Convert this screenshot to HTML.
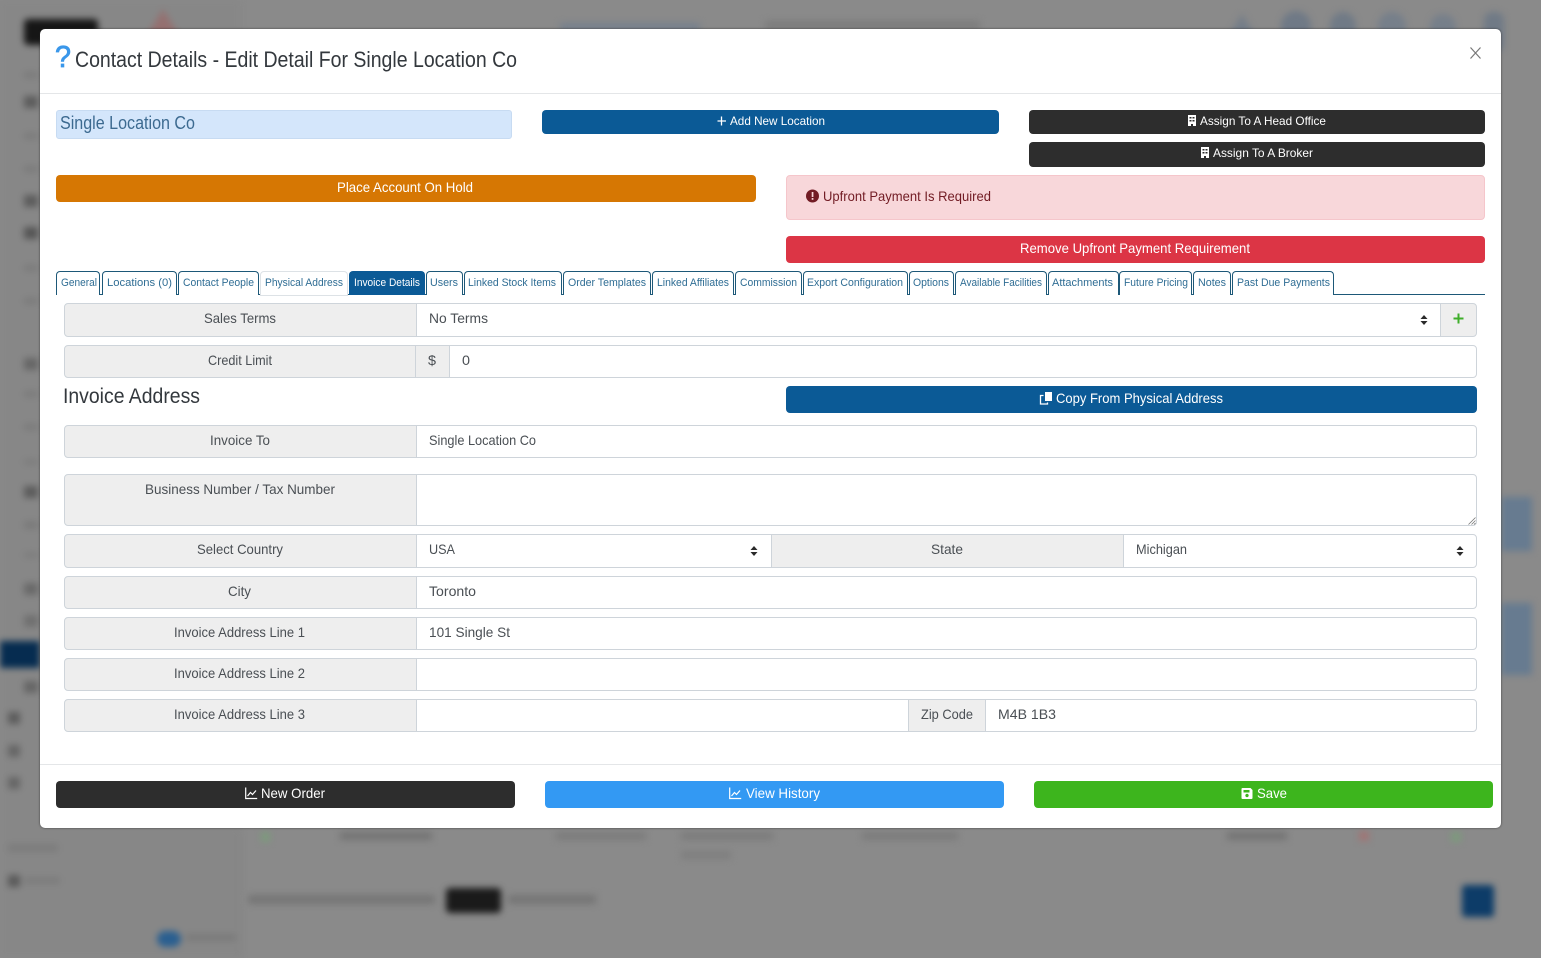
<!DOCTYPE html>
<html lang="en"><head><meta charset="utf-8"><title>Contact Details</title>
<style>
html,body{margin:0;padding:0;width:1541px;height:958px;overflow:hidden;background:#8a8a8a}
#bg{position:absolute;left:0;top:0;width:1541px;height:958px;filter:blur(3.500px);overflow:hidden}
#bg div{position:absolute}
#modal{position:absolute;left:40px;top:29px;width:1461px;height:799px;background:#fff;border-radius:5px;box-shadow:0 0 2px rgba(40,40,40,.8)}
.b{position:absolute;box-sizing:border-box}
.btn{border-radius:4px}
.lab{background:#eee;border:1px solid #ced4da;border-radius:4px 0 0 4px}
.inp{background:#fff;border:1px solid #ced4da}
.rr{border-radius:0 4px 4px 0}
.tab{position:absolute;top:271px;height:24px;box-sizing:border-box;border:1px solid #1d5878;border-bottom:0;border-radius:4px 4px 0 0;background:#fff}
svg#t{position:absolute;left:0;top:0}
svg#t text{font-family:"Liberation Sans",sans-serif;fill:#4a4f54}
</style></head><body>
<div id="bg">
<div style="left:-10px;top:-10px;width:250px;height:980px;background:#878787"></div>
<div style="left:24px;top:19px;width:74px;height:26px;background:#161616;border-radius:4px"></div>
<div style="left:145px;top:9px;width:36px;height:30px;background:#947070;clip-path:polygon(50% 0,100% 100%,0 100%)"></div>
<div style="left:560px;top:23px;width:140px;height:8px;background:#76808d"></div>
<div style="left:765px;top:21px;width:215px;height:8px;background:#7c7c7c"></div>
<div style="left:1226px;top:14px;width:32px;height:26px;background:#747d88;clip-path:polygon(50% 0,100% 100%,0 100%)"></div>
<div style="left:1281px;top:11px;width:30px;height:30px;background:#6f7986;border-radius:50%"></div>
<div style="left:1330px;top:12px;width:26px;height:28px;background:#707a86;border-radius:50%"></div>
<div style="left:1378px;top:12px;width:28px;height:28px;background:#767f8a;border-radius:50%"></div>
<div style="left:1430px;top:14px;width:26px;height:26px;background:#767f8a;border-radius:50%"></div>
<div style="left:1484px;top:12px;width:20px;height:40px;background:#707a86;border-radius:8px"></div>
<div style="left:-10px;top:641px;width:50px;height:27px;background:#062c50"></div>
<div style="left:24px;top:72px;width:14px;height:6px;background:#7a7a7a"></div>
<div style="left:24px;top:96px;width:14px;height:12px;background:#5c5c5c"></div>
<div style="left:24px;top:133px;width:14px;height:6px;background:#7a7a7a"></div>
<div style="left:24px;top:166px;width:14px;height:6px;background:#7a7a7a"></div>
<div style="left:24px;top:195px;width:14px;height:12px;background:#5c5c5c"></div>
<div style="left:24px;top:227px;width:14px;height:12px;background:#555"></div>
<div style="left:24px;top:265px;width:14px;height:6px;background:#7a7a7a"></div>
<div style="left:24px;top:298px;width:14px;height:6px;background:#7a7a7a"></div>
<div style="left:24px;top:358px;width:14px;height:12px;background:#666"></div>
<div style="left:24px;top:391px;width:14px;height:6px;background:#7a7a7a"></div>
<div style="left:24px;top:424px;width:14px;height:6px;background:#7a7a7a"></div>
<div style="left:24px;top:459px;width:14px;height:6px;background:#7d7d7d"></div>
<div style="left:24px;top:486px;width:14px;height:12px;background:#5c5c5c"></div>
<div style="left:24px;top:521px;width:14px;height:8px;background:#7a7a7a"></div>
<div style="left:24px;top:552px;width:14px;height:6px;background:#7d7d7d"></div>
<div style="left:24px;top:583px;width:14px;height:12px;background:#696969"></div>
<div style="left:24px;top:615px;width:14px;height:12px;background:#707070"></div>
<div style="left:24px;top:681px;width:14px;height:12px;background:#666"></div>
<div style="left:8px;top:712px;width:12px;height:12px;background:#5c5c5c"></div>
<div style="left:8px;top:745px;width:12px;height:12px;background:#666"></div>
<div style="left:8px;top:777px;width:12px;height:12px;background:#666"></div>
<div style="left:8px;top:844px;width:50px;height:8px;background:#7c7c7c"></div>
<div style="left:8px;top:875px;width:12px;height:12px;background:#5a5a5a"></div>
<div style="left:24px;top:877px;width:36px;height:7px;background:#7c7c7c"></div>
<div style="left:240px;top:830px;width:1px;height:128px;background:#7d7d7d"></div>
<div style="left:1501px;top:497px;width:31px;height:54px;background:#677b90"></div>
<div style="left:1501px;top:603px;width:31px;height:72px;background:#677b90"></div>
<div style="left:340px;top:832px;width:92px;height:8px;background:#747474"></div>
<div style="left:556px;top:832px;width:90px;height:8px;background:#7c7c7c"></div>
<div style="left:681px;top:832px;width:92px;height:8px;background:#7c7c7c"></div>
<div style="left:681px;top:851px;width:50px;height:8px;background:#7f7f7f"></div>
<div style="left:862px;top:832px;width:96px;height:8px;background:#7c7c7c"></div>
<div style="left:1227px;top:832px;width:60px;height:8px;background:#747474"></div>
<div style="left:1359px;top:831px;width:10px;height:10px;background:#a07575"></div>
<div style="left:1451px;top:832px;width:10px;height:10px;background:#7c9a7c"></div>
<div style="left:261px;top:832px;width:9px;height:10px;background:#7c9a7c"></div>
<div style="left:248px;top:895px;width:187px;height:9px;background:#767676"></div>
<div style="left:446px;top:888px;width:55px;height:25px;background:#1a1a1a;border-radius:4px"></div>
<div style="left:508px;top:895px;width:88px;height:9px;background:#767676"></div>
<div style="left:1462px;top:885px;width:32px;height:32px;background:#0d3c68;border-radius:3px"></div>
<div style="left:157px;top:931px;width:24px;height:16px;background:#2a5f90;border-radius:8px"></div>
<div style="left:186px;top:934px;width:50px;height:7px;background:#7a7a7a"></div>
</div>

<div id="modal"></div>

<!-- header / footer rules -->
<div class="b" style="left:40px;top:93px;width:1461px;height:1px;background:#e4e6e8"></div>
<div class="b" style="left:40px;top:764px;width:1461px;height:1px;background:#e4e6e8"></div>

<!-- top controls -->
<div class="b" style="left:56px;top:110px;width:456px;height:29px;background:#d4e6fb;border:1px solid #c7dbf2;border-radius:3px"></div>
<div class="b btn" style="left:542px;top:110px;width:457px;height:24px;background:#0b5a96"></div>
<div class="b btn" style="left:1029px;top:110px;width:456px;height:24px;background:#2d2d2d"></div>
<div class="b btn" style="left:1029px;top:142px;width:456px;height:25px;background:#2d2d2d"></div>
<div class="b btn" style="left:56px;top:175px;width:700px;height:27px;background:#d67703"></div>
<div class="b btn" style="left:786px;top:175px;width:699px;height:45px;background:#f8d7da;border:1px solid #f5c6cb"></div>
<div class="b btn" style="left:786px;top:236px;width:699px;height:27px;background:#dc3545"></div>

<!-- tabs -->
<div class="b" style="left:56px;top:294px;width:1429px;height:1px;background:#1d5878"></div>
<div class="tab" style="left:56px;width:44px"></div>
<div class="tab" style="left:102px;width:75px"></div>
<div class="tab" style="left:178px;width:81px"></div>
<div class="tab" style="left:260px;width:88px;border-color:#dde2e6;height:25px;border-bottom:1px solid #dde2e6"></div>
<div class="tab" style="left:349px;width:76px;background:#0b5a96;border-color:#0b5a96"></div>
<div class="tab" style="left:426px;width:37px"></div>
<div class="tab" style="left:464px;width:98px"></div>
<div class="tab" style="left:563px;width:88px"></div>
<div class="tab" style="left:652px;width:82px"></div>
<div class="tab" style="left:735px;width:67px"></div>
<div class="tab" style="left:803px;width:105px"></div>
<div class="tab" style="left:909px;width:45px"></div>
<div class="tab" style="left:955px;width:92px"></div>
<div class="tab" style="left:1048px;width:71px"></div>
<div class="tab" style="left:1119px;width:73px"></div>
<div class="tab" style="left:1193px;width:38px"></div>
<div class="tab" style="left:1232px;width:102px"></div>

<!-- form rows -->
<div class="b lab" style="left:64px;top:303px;width:353px;height:34px"></div>
<div class="b inp" style="left:416px;top:303px;width:1025px;height:34px"></div>
<div class="b lab rr" style="left:1440px;top:303px;width:37px;height:34px;border-radius:0 4px 4px 0"></div>

<div class="b lab" style="left:64px;top:345px;width:352px;height:33px"></div>
<div class="b lab" style="left:415px;top:345px;width:35px;height:33px;border-radius:0"></div>
<div class="b inp rr" style="left:449px;top:345px;width:1028px;height:33px"></div>

<div class="b btn" style="left:786px;top:386px;width:691px;height:27px;background:#0b5a96"></div>

<div class="b lab" style="left:64px;top:425px;width:353px;height:33px"></div>
<div class="b inp rr" style="left:416px;top:425px;width:1061px;height:33px"></div>

<div class="b lab" style="left:64px;top:474px;width:353px;height:52px"></div>
<div class="b inp rr" style="left:416px;top:474px;width:1061px;height:52px"></div>

<div class="b lab" style="left:64px;top:534px;width:353px;height:34px"></div>
<div class="b inp" style="left:416px;top:534px;width:356px;height:34px"></div>
<div class="b lab" style="left:771px;top:534px;width:353px;height:34px;border-radius:0"></div>
<div class="b inp rr" style="left:1123px;top:534px;width:354px;height:34px"></div>

<div class="b lab" style="left:64px;top:576px;width:353px;height:33px"></div>
<div class="b inp rr" style="left:416px;top:576px;width:1061px;height:33px"></div>

<div class="b lab" style="left:64px;top:617px;width:353px;height:33px"></div>
<div class="b inp rr" style="left:416px;top:617px;width:1061px;height:33px"></div>

<div class="b lab" style="left:64px;top:658px;width:353px;height:33px"></div>
<div class="b inp rr" style="left:416px;top:658px;width:1061px;height:33px"></div>

<div class="b lab" style="left:64px;top:699px;width:353px;height:33px"></div>
<div class="b inp" style="left:416px;top:699px;width:493px;height:33px"></div>
<div class="b lab" style="left:908px;top:699px;width:78px;height:33px;border-radius:0"></div>
<div class="b inp rr" style="left:985px;top:699px;width:492px;height:33px"></div>

<!-- footer buttons -->
<div class="b btn" style="left:56px;top:781px;width:459px;height:27px;background:#2d2d2d"></div>
<div class="b btn" style="left:545px;top:781px;width:459px;height:27px;background:#3399f3"></div>
<div class="b btn" style="left:1034px;top:781px;width:459px;height:27px;background:#3db51d"></div>

<svg id="t" width="1541" height="958" viewBox="0 0 1541 958" xmlns="http://www.w3.org/2000/svg">
<!-- header -->
<text x="55" y="67" font-size="31" textLength="16" lengthAdjust="spacingAndGlyphs" style="fill:#3a97ea;stroke:#3a97ea;stroke-width:.8px">?</text>
<text x="75" y="67" font-size="22" textLength="442" lengthAdjust="spacingAndGlyphs" style="fill:#33383d">Contact Details - Edit Detail For Single Location Co</text>
<path d="M1470.500 47.500L1480.500 58.500M1480.500 47.500L1470.500 58.500" stroke="#777" stroke-width="1.200" fill="none"/>

<text x="60" y="129" font-size="18" textLength="135" lengthAdjust="spacingAndGlyphs" style="fill:#3c6a90">Single Location Co</text>

<!-- Add new location -->
<path d="M721.500 116.500v9M717.500 121h8.500" stroke="#fff" stroke-width="1.300"/>
<text x="730" y="125" font-size="12" textLength="95" lengthAdjust="spacingAndGlyphs" style="fill:#fff">Add New Location</text>

<!-- building icons -->
<path fill="#fff" fill-rule="evenodd" d="M1188 115h8v11h-3v-2h-2v2h-3zM1189.500 117v1.500h2V117zM1192.500 117v1.500h2V117zM1189.500 120v1.500h2V120zM1192.500 120v1.500h2V120z"/>
<text x="1200" y="125" font-size="12" textLength="126" lengthAdjust="spacingAndGlyphs" style="fill:#fff">Assign To A Head Office</text>
<path fill="#fff" fill-rule="evenodd" d="M1201 147h8v11h-3v-2h-2v2h-3zM1202.500 149v1.500h2V149zM1205.500 149v1.500h2V149zM1202.500 152v1.500h2V152zM1205.500 152v1.500h2V152z"/>
<text x="1213" y="157" font-size="12" textLength="100" lengthAdjust="spacingAndGlyphs" style="fill:#fff">Assign To A Broker</text>

<text x="337" y="192" font-size="14" textLength="136" lengthAdjust="spacingAndGlyphs" style="fill:#fff">Place Account On Hold</text>

<!-- alert -->
<circle cx="812.500" cy="196" r="6.500" fill="#721c24"/>
<rect x="811.700" y="192" width="1.700" height="5" fill="#f8d7da"/>
<rect x="811.700" y="198" width="1.700" height="1.800" fill="#f8d7da"/>
<text x="823" y="201" font-size="14" textLength="168" lengthAdjust="spacingAndGlyphs" style="fill:#721c24">Upfront Payment Is Required</text>

<text x="1020" y="253" font-size="14" textLength="230" lengthAdjust="spacingAndGlyphs" style="fill:#fff">Remove Upfront Payment Requirement</text>

<!-- tab labels -->
<g>
<text x="61" y="286" font-size="11" textLength="36" lengthAdjust="spacingAndGlyphs" style="fill:#2f6d94">General</text>
<text x="107" y="286" font-size="11" textLength="65" lengthAdjust="spacingAndGlyphs" style="fill:#2f6d94">Locations (0)</text>
<text x="183" y="286" font-size="11" textLength="71" lengthAdjust="spacingAndGlyphs" style="fill:#2f6d94">Contact People</text>
<text x="265" y="286" font-size="11" textLength="78" lengthAdjust="spacingAndGlyphs" style="fill:#2f6d94">Physical Address</text>
<text x="354" y="286" font-size="11" textLength="66" lengthAdjust="spacingAndGlyphs" style="fill:#fff">Invoice Details</text>
<text x="430" y="286" font-size="11" textLength="28" lengthAdjust="spacingAndGlyphs" style="fill:#2f6d94">Users</text>
<text x="468" y="286" font-size="11" textLength="88" lengthAdjust="spacingAndGlyphs" style="fill:#2f6d94">Linked Stock Items</text>
<text x="568" y="286" font-size="11" textLength="78" lengthAdjust="spacingAndGlyphs" style="fill:#2f6d94">Order Templates</text>
<text x="657" y="286" font-size="11" textLength="72" lengthAdjust="spacingAndGlyphs" style="fill:#2f6d94">Linked Affiliates</text>
<text x="740" y="286" font-size="11" textLength="57" lengthAdjust="spacingAndGlyphs" style="fill:#2f6d94">Commission</text>
<text x="807" y="286" font-size="11" textLength="96" lengthAdjust="spacingAndGlyphs" style="fill:#2f6d94">Export Configuration</text>
<text x="913" y="286" font-size="11" textLength="36" lengthAdjust="spacingAndGlyphs" style="fill:#2f6d94">Options</text>
<text x="960" y="286" font-size="11" textLength="82" lengthAdjust="spacingAndGlyphs" style="fill:#2f6d94">Available Facilities</text>
<text x="1052" y="286" font-size="11" textLength="61" lengthAdjust="spacingAndGlyphs" style="fill:#2f6d94">Attachments</text>
<text x="1124" y="286" font-size="11" textLength="64" lengthAdjust="spacingAndGlyphs" style="fill:#2f6d94">Future Pricing</text>
<text x="1198" y="286" font-size="11" textLength="28" lengthAdjust="spacingAndGlyphs" style="fill:#2f6d94">Notes</text>
<text x="1237" y="286" font-size="11" textLength="93" lengthAdjust="spacingAndGlyphs" style="fill:#2f6d94">Past Due Payments</text>
</g>

<!-- form labels -->
<g>
<text x="204" y="323" font-size="14" textLength="72" lengthAdjust="spacingAndGlyphs">Sales Terms</text>
<text x="429" y="323" font-size="14" textLength="59" lengthAdjust="spacingAndGlyphs">No Terms</text>
<path d="M1424 315l-3.500 4h7zM1424 325l-3.500-4h7z" fill="#2a2a2a"/>
<path d="M1458.500 313.500v10M1453.500 318.500h10" stroke="#3fae2a" stroke-width="2"/>

<text x="208" y="365" font-size="14" textLength="64" lengthAdjust="spacingAndGlyphs">Credit Limit</text>
<text x="428" y="365" font-size="14" textLength="8" lengthAdjust="spacingAndGlyphs">$</text>
<text x="462" y="365" font-size="14" textLength="8" lengthAdjust="spacingAndGlyphs">0</text>

<text x="63" y="403" font-size="21" textLength="137" lengthAdjust="spacingAndGlyphs" style="fill:#33383d">Invoice Address</text>

<path fill="#fff" d="M1045 392h7v9h-7z"/>
<path fill="none" stroke="#fff" stroke-width="1.300" d="M1043.500 395.500h-3v8.500h7v-1.500"/>
<text x="1056" y="403" font-size="14" textLength="167" lengthAdjust="spacingAndGlyphs" style="fill:#fff">Copy From Physical Address</text>

<text x="210" y="445" font-size="14" textLength="60" lengthAdjust="spacingAndGlyphs">Invoice To</text>
<text x="429" y="445" font-size="14" textLength="107" lengthAdjust="spacingAndGlyphs">Single Location Co</text>

<text x="145" y="494" font-size="14" textLength="190" lengthAdjust="spacingAndGlyphs">Business Number / Tax Number</text>
<path d="M1468.500 524.500l7-7M1471.500 524.500l4-4M1474 524.500l1.500-1.500" stroke="#777" stroke-width="0.800" fill="none"/>

<text x="197" y="554" font-size="14" textLength="86" lengthAdjust="spacingAndGlyphs">Select Country</text>
<text x="429" y="554" font-size="14" textLength="26" lengthAdjust="spacingAndGlyphs">USA</text>
<path d="M754 546l-3.500 4h7zM754 556l-3.500-4h7z" fill="#2a2a2a"/>
<text x="931" y="554" font-size="14" textLength="32" lengthAdjust="spacingAndGlyphs">State</text>
<text x="1136" y="554" font-size="14" textLength="51" lengthAdjust="spacingAndGlyphs">Michigan</text>
<path d="M1460 546l-3.500 4h7zM1460 556l-3.500-4h7z" fill="#2a2a2a"/>

<text x="228" y="596" font-size="14" textLength="23" lengthAdjust="spacingAndGlyphs">City</text>
<text x="429" y="596" font-size="14" textLength="47" lengthAdjust="spacingAndGlyphs">Toronto</text>

<text x="174" y="637" font-size="14" textLength="131" lengthAdjust="spacingAndGlyphs">Invoice Address Line 1</text>
<text x="429" y="637" font-size="14" textLength="81" lengthAdjust="spacingAndGlyphs">101 Single St</text>

<text x="174" y="678" font-size="14" textLength="131" lengthAdjust="spacingAndGlyphs">Invoice Address Line 2</text>

<text x="174" y="719" font-size="14" textLength="131" lengthAdjust="spacingAndGlyphs">Invoice Address Line 3</text>
<text x="921" y="719" font-size="14" textLength="52" lengthAdjust="spacingAndGlyphs">Zip Code</text>
<text x="998" y="719" font-size="14" textLength="58" lengthAdjust="spacingAndGlyphs">M4B 1B3</text>
</g>

<!-- footer -->
<path d="M245.700 787.500v11h11.500M247.500 796l3-3.500 2 2 3.500-4" stroke="#fff" stroke-width="1.200" fill="none"/>
<text x="261" y="798" font-size="14" textLength="64" lengthAdjust="spacingAndGlyphs" style="fill:#fff">New Order</text>
<path d="M729.700 787.500v11h11.500M731.500 796l3-3.500 2 2 3.500-4" stroke="#fff" stroke-width="1.200" fill="none"/>
<text x="746" y="798" font-size="14" textLength="74" lengthAdjust="spacingAndGlyphs" style="fill:#fff">View History</text>
<path fill="#fff" fill-rule="evenodd" d="M1242.500 788h8l2 2v8q0 1-1 1h-9q-1 0-1-1v-9q0-1 1-1zM1243.500 790v2.500h6V790zM1247 793.800a1.700 1.700 0 1 0 .01 0z"/>
<text x="1257" y="798" font-size="14" textLength="30" lengthAdjust="spacingAndGlyphs" style="fill:#fff">Save</text>
</svg>
</body></html>
